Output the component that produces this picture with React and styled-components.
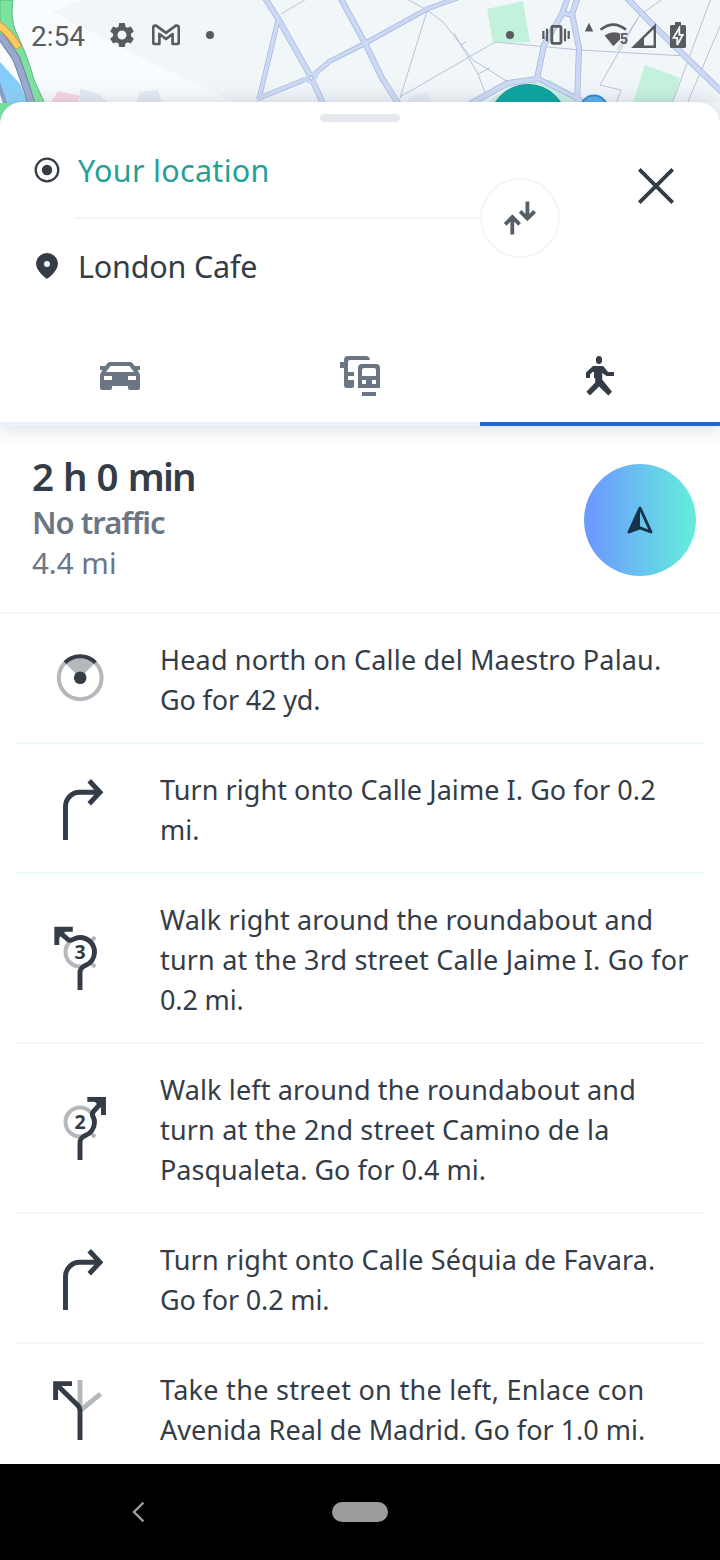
import React from 'react'
import styled, { createGlobalStyle, ThemeProvider } from 'styled-components'
import { MdSettings } from 'react-icons/md'

const theme = {
  text: '#343c47',
  muted: '#6c7584',
  teal: '#26a097',
  accent: '#2068d8',
  status: '#595b5e',
  faded: '#b4b8bd',
  line: '#f3f5f7'
}

const GlobalStyle = createGlobalStyle`
  * {
    box-sizing: border-box;
  }
  body {
    margin: 0;
    background: #fff;
    font-family: 'Noto Sans', 'Open Sans', sans-serif;
  }
  svg {
    display: block;
    flex: none;
  }
  h1, h2, p, ol {
    margin: 0;
    padding: 0;
    font-weight: 400;
  }
`

const Screen = styled.div`
  width: 720px;
  height: 1560px;
  display: flex;
  flex-direction: column;
  overflow: hidden;
  background: #fff;
`
const MapStrip = styled.div`
  position: relative;
  height: 102px;
  flex: none;
`
const MapCanvas = styled.svg`
  position: absolute;
  top: 0;
  left: 0;
`
const StatusBar = styled.div`
  position: relative;
  display: flex;
  align-items: center;
  height: 70px;
  padding: 0 34px 0 31px;
  color: ${({ theme }) => theme.status};
`
const Clock = styled.span`
  width: 56px;
  font: 28px/33px Roboto, sans-serif;
  padding-top: 3px;
`
const StatusIcon = styled.svg`
  margin-left: ${({ $gap }) => $gap}px;
`
const Gear = styled(MdSettings)`
  margin-left: 20px;
`
const Dot = styled.span`
  width: 8px;
  height: 8px;
  margin-left: ${({ $gap }) => $gap};
  border-radius: 50%;
  background: currentColor;
`

const Header = styled.header`
  position: relative;
  z-index: 1;
  flex: none;
  height: 324px;
  padding-top: 12px;
  border-radius: 22px 22px 0 0;
  background: #fff;
  box-shadow: 0 3px 18px rgba(52, 60, 90, 0.18);
`
const Handle = styled.div`
  width: 80px;
  height: 8px;
  margin: 0 auto;
  border-radius: 4px;
  background: #e5e8ef;
`
const RouteForm = styled.div`
  display: flex;
  height: 204px;
`
const Waypoints = styled.div`
  width: 480px;
`
const Waypoint = styled.div`
  display: flex;
  align-items: center;
  height: 96px;
  padding-left: 34px;
  gap: 18px;
  color: ${({ theme }) => theme.text};
`
const WaypointName = styled.span`
  font-size: 30.5px;
  line-height: 40px;
  letter-spacing: ${({ $track }) => $track}px;
  color: ${({ $active, theme }) => ($active ? theme.teal : theme.text)};
`
const Separator = styled.div`
  height: 2px;
  margin: -1px 0 -1px 76px;
  background: ${({ theme }) => theme.line};
`
const SwapButton = styled.button`
  display: flex;
  align-items: center;
  justify-content: center;
  width: 80px;
  height: 80px;
  margin: 56px 0 0;
  padding: 0;
  border: 2px solid #f3f5f8;
  border-radius: 50%;
  background: #fff;
`
const CloseButton = styled.button`
  width: 48px;
  height: 48px;
  margin: 40px 0 0 72px;
  padding: 0;
  border: 0;
  background: none;
`
const Tabs = styled.nav`
  display: grid;
  grid-template-columns: repeat(3, 1fr);
  height: 100px;
`
const Tab = styled.div`
  display: flex;
  align-items: center;
  justify-content: center;
  padding-top: 4px;
  color: ${({ $active, theme }) => ($active ? theme.text : theme.muted)};
  border-bottom: 4px solid
    ${({ $active, theme }) => ($active ? theme.accent : '#edf3fb')};
`

const Summary = styled.section`
  display: flex;
  justify-content: space-between;
  flex: none;
  height: 188px;
  padding: 25px 24px 0 32px;
  border-bottom: 2px solid ${({ theme }) => theme.line};
`
const Duration = styled.h1`
  font-size: 38.5px;
  line-height: 50px;
  font-weight: 600;
  letter-spacing: ${({ $track }) => $track}px;
  word-spacing: 2.4px;
  color: ${({ theme }) => theme.text};
`
const Traffic = styled.h2`
  font-size: 31px;
  line-height: 42px;
  font-weight: 600;
  letter-spacing: ${({ $track }) => $track}px;
  color: ${({ theme }) => theme.muted};
`
const Distance = styled.p`
  font-size: 29.5px;
  line-height: 40px;
  letter-spacing: ${({ $track }) => $track}px;
  color: ${({ theme }) => theme.muted};
`
const StartButton = styled.button`
  display: flex;
  align-items: center;
  justify-content: center;
  width: 112px;
  height: 112px;
  margin-top: 13px;
  padding: 0;
  border: 0;
  border-radius: 50%;
  background: linear-gradient(90deg, #6c9cff 8%, #65e8de 92%);
`

const Steps = styled.ol`
  flex: 1;
  min-height: 0;
  overflow: hidden;
  padding: 0 16px;
  list-style: none;
`
const Step = styled.li`
  display: flex;
  align-items: center;
  gap: 48px;
  padding: 24px 0 24px 32px;
  border-bottom: 2px solid ${({ $tint }) => ($tint ? '#effaf7' : '#f4f6f6')};
  color: ${({ theme }) => theme.text};
`
const StepText = styled.div`
  display: flex;
  flex-direction: column;
`
const StepLine = styled.span`
  font-size: 27px;
  line-height: 40px;
  white-space: nowrap;
  letter-spacing: ${({ $track }) => $track}px;
  transform: translateY(2px);
`
const StepNumber = styled.text`
  font: 700 19.5px 'Open Sans', sans-serif;
  text-anchor: middle;
  fill: currentColor;
`

const NavBar = styled.footer`
  display: grid;
  grid-template-columns: 276px 168px 276px;
  align-items: center;
  justify-items: center;
  flex: none;
  height: 96px;
  background: #000;
`
const HomePill = styled.div`
  width: 56px;
  height: 20px;
  border-radius: 10px;
  background: #9b9b9b;
`

const roads = [
  ['M265 -2L279 20L311 77L324 106', 6],
  ['M278 20L259 99', 5],
  ['M257 99L311 77L330 61L362 45L427 9L460 -3', 5],
  ['M340 -3L365 43L382 78L401 108', 6],
  ['M568 -3L562 14L544 45L538 74Q538 80 530 80L508 83L470 104', 6],
  ['M578 -3L572 14L579 48L577 104', 6],
  ['M562 13L572 15', 5],
  ['M537 78L584 102', 5],
  ['M625 -4L650 22L697 68L724 94', 6]
]
const paths = [
  'M405 -2L427 10L443 22L473 60L508 82',
  'M428 8L400 98',
  'M400 97L495 42L580 50L685 56',
  'M711 -2L672 104',
  'M726 12L687 104',
  'M638 18L600 85L621 90L616 104',
  'M664 -2L640 15L617 50',
  'M281 14L308 -2',
  'M454 33L478 74L487 98',
  'M478 74L490 68',
  'M460 45L466 42'
]

function MapBackground () {
  return (
    <MapCanvas width='720' height='126' viewBox='0 0 720 126'>
      <defs>
        <linearGradient id='shade' x1='0' y1='0' x2='0' y2='1'>
          <stop offset='0' stopColor='#c9d2e0' stopOpacity='0' />
          <stop offset='1' stopColor='#c3cad8' stopOpacity='0.15' />
        </linearGradient>
      </defs>
      <rect width='720' height='126' fill='#f1f6f9' />
      <path d='M0 0H80L52 12L150 62L235 102V126H0Z' fill='#f8fcfe' />
      <path d='M58 91L80 96L78 104H50Z' fill='#f8d3e4' />
      <path d='M80 89L98 94L110 104H80Z M140 92L158 90L162 104H136Z M410 96L428 92L432 104H406Z' fill='#e5ebf2' />
      <path d='M0 62L20 84L28 104H4L0 90Z' fill='#84cdfa' />
      <path d='M0 0H13Q10 18 16 32L24 50Q31 68 34 80L46 106H34L24 75Q16 55 0 36Z' fill='#7be39d' stroke='#58b781' strokeWidth='1' />
      <path d='M0 35L16 58Q24 78 32 106' fill='none' stroke='#6e82b0' strokeWidth='8' />
      <path d='M0 35L16 58Q24 78 32 106' fill='none' stroke='#97a9cb' strokeWidth='6' />
      <path d='M-2 82L6 106' stroke='#7f9bc4' strokeWidth='4' />
      <path d='M-3 24Q8 31 17 45' fill='none' stroke='#d89a4b' strokeWidth='8' strokeLinecap='round' />
      <path d='M-3 24Q8 31 17 45' fill='none' stroke='#ffca60' strokeWidth='6' strokeLinecap='round' />
      <path d='M0 103H12V126H0Z' fill='#7be39d' />
      <path d='M487 9L523 1L530 42L493 43Z M645 65L680 78L672 106H632Z' fill='#c3f2dc' />
      <path d='M485 104L510 86L550 80L582 98V106Z' fill='#c9efe6' />
      {paths.map((d) => (
        <path key={d} d={d} fill='none' stroke='#b3bbd6' strokeWidth='0.9' />
      ))}
      {roads.map(([d, w]) => (
        <path key={d} d={d} fill='none' stroke='#a3b3dc' strokeWidth={w} />
      ))}
      {roads.map(([d, w]) => (
        <path key={d} d={d} fill='none' stroke='#ccd9f5' strokeWidth={w - 1.4} />
      ))}
      <path d='M300 80L311 73L323 66L316 81L311 84Z' fill='#ccd9f5' />
      <circle cx='311' cy='78' r='2.2' fill='#e3ebfb' stroke='#a3b3dc' />
      <rect y='78' width='720' height='24' fill='url(#shade)' />
      <circle cx='528' cy='123.5' r='39' fill='#0ea5a0' stroke='#188c8c' />
      <circle cx='594' cy='109' r='13.5' fill='#5aaee8' stroke='#3f86cc' strokeWidth='2' />
    </MapCanvas>
  )
}

function StatusIcons () {
  return (
    <StatusBar>
      <Clock>2:54</Clock>
      <Gear size={30} />
      <StatusIcon $gap={15} width='28' height='30' viewBox='0 0 28 30'>
        <path
          d='M4.2 5.6L14 12.8L23.8 5.6Q26.8 5 26.8 8V22.2Q26.8 24 25 24H20.6V14L14 19L7.4 14V24H3Q1.2 24 1.2 22.2V8Q1.2 5 4.2 5.6Z'
          fill='none'
          stroke='currentColor'
          strokeWidth='2.7'
          strokeLinejoin='round'
        />
      </StatusIcon>
      <Dot $gap='26px' />
      <Dot $gap='auto' />
      <StatusIcon $gap={28} width='28' height='30' viewBox='0 0 28 30'>
        <rect x='9.8' y='6.3' width='9.2' height='17' rx='1' fill='none' stroke='currentColor' strokeWidth='2.8' />
        <path d='M1.4 11V19M5 8.7V21.3M23 8.7V21.3M26.7 11V19' stroke='currentColor' strokeWidth='2.2' />
      </StatusIcon>
      <StatusIcon $gap={15} width='8' height='30' viewBox='0 0 8 30'>
        <path d='M4 2.7L8.3 11.6H-0.3Z' fill='currentColor' />
      </StatusIcon>
      <StatusIcon $gap={7} width='31' height='30' viewBox='0 0 31 30'>
        <path d='M0.6 9.8Q13.3 -.6 26 9.8' fill='none' stroke='currentColor' strokeWidth='2.6' />
        <path d='M4.6 15.6Q13.3 9.4 21.8 14.4H20V19.5L13.3 26.3Z' fill='currentColor' />
        <text x='19.8' y='24.3' fill='currentColor' fontFamily='Roboto, sans-serif' fontWeight='700' fontSize='14.5'>5</text>
      </StatusIcon>
      <StatusIcon $gap={0} width='25' height='30' viewBox='0 0 25 30'>
        <path fillRule='evenodd' d='M0 28L25 3.3V28Z M13 18.5V25.6H22.6V9.2Z' fill='currentColor' />
      </StatusIcon>
      <StatusIcon $gap={14} width='16' height='30' viewBox='0 0 16 30'>
        <path d='M5 2H11V5H14.5Q16 5 16 6.5V26.5Q16 28 14.5 28H1.5Q0 28 0 26.5V6.5Q0 5 1.5 5H5Z' fill='currentColor' />
        <path d='M9.3 8L3.4 17.8H7.2V25L12.8 14.8H9.3Z' fill='currentColor' stroke='#f4f8fa' strokeWidth='1.8' />
      </StatusIcon>
    </StatusBar>
  )
}

function OriginIcon () {
  return (
    <svg width='26' height='26' viewBox='0 0 26 26' fill='none'>
      <circle cx='13' cy='13' r='11.3' stroke='currentColor' strokeWidth='2.3' />
      <circle cx='13' cy='13' r='5.2' fill='currentColor' />
    </svg>
  )
}

function PinIcon () {
  return (
    <svg width='26' height='26' viewBox='0 0 26 26'>
      <path
        fillRule='evenodd'
        fill='currentColor'
        d='M13 25.8C11 24.6 2.1 17.5 2.1 10.9a10.9 10.9 0 0 1 21.8 0C23.9 17.5 15 24.6 13 25.8Z M13 8.1a2.9 2.9 0 1 0 0 5.8a2.9 2.9 0 0 0 0-5.8Z'
      />
    </svg>
  )
}

function SwapIcon () {
  return (
    <svg width='40' height='40' viewBox='0 0 40 40' fill='none' stroke='#565e69' strokeWidth='3.8'>
      <path d='M12.3 36.4V19M5.2 26.4L12.3 19L19.6 26.4' />
      <path d='M27.4 3.4V20.6M20.2 13.3L27.4 20.6L34.6 13.3' />
    </svg>
  )
}

function CloseIcon () {
  return (
    <svg width='48' height='48' viewBox='0 0 48 48' stroke='#343c47' strokeWidth='3.8'>
      <path d='M7.3 7.3L40.7 40.7M40.7 7.3L7.3 40.7' />
    </svg>
  )
}

function CarIcon () {
  return (
    <svg width='48' height='48' viewBox='0 0 48 48' fill='currentColor' fillRule='evenodd'>
      <path d='M14 10H34Q36 10 37.2 12L38.6 14H44V18H41.5L43 20.5Q44 22 44 24V36Q44 38 42 38H34Q32 38 32 36V34H16V36Q16 38 14 38H6Q4 38 4 36V24Q4 22 5 20.5L6.5 18H4V14H9.4L10.8 12Q12 10 14 10Z M14.6 14L10 20H38L33.4 14Z M8 24V28H16V24Z M32 24V28H40V24Z' />
    </svg>
  )
}

function TransitIcon () {
  return (
    <svg width='48' height='48' viewBox='0 0 48 48' fill='currentColor' fillRule='evenodd'>
      <path d='M12 4H30Q33.5 4 34 8H14Q12 8 12 10V20H18V24H12V28H18V34Q18 36 16 36H11Q8 36 8 33V16H4V10H8V8Q8 4 12 4Z' />
      <path d='M26 12H40Q44 12 44 16V36H22V16Q22 12 26 12Z M28 16Q26 16 26 18V24H40V18Q40 16 38 16Z M26 28V32H30V28Z M36 28V32H40V28Z' />
      <path d='M26 40H40V44H26Z' />
    </svg>
  )
}

function WalkIcon () {
  return (
    <svg width='48' height='48' viewBox='0 0 48 48' fill='currentColor'>
      <ellipse cx='23' cy='8' rx='3.1' ry='4' />
      <path d='M17 14H26Q27.2 14 28 15L32 20H38V24H30.5L26.2 21V27.5L36 39.8L32.4 43.6L23 34.4L14 43.6L10.4 39.8L19.2 30.5V26H18V20H16.5L14 22.5V26H10V20.5Z' />
    </svg>
  )
}

function NavigateIcon () {
  return (
    <svg width='32' height='32' viewBox='0 0 32 32'>
      <path d='M16 4L5 28L16 23.8L27 28Z' fill='none' stroke='#14344c' strokeWidth='2.9' strokeLinejoin='round' />
      <path d='M16 3.5L4.5 28L16 24Z' fill='#14344c' />
    </svg>
  )
}

function StepIcon ({ children }) {
  return (
    <svg width='64' height='64' viewBox='0 0 64 64' fill='none' stroke='currentColor' strokeWidth='4.9'>
      {children}
    </svg>
  )
}

function DepartIcon () {
  return (
    <StepIcon>
      <path d='M32 32L16.6 16.6A21.8 21.8 0 0 1 47.4 16.6Z' fill={theme.faded} stroke='none' />
      <circle cx='32.2' cy='31.8' r='21.4' stroke={theme.faded} strokeWidth='4' />
      <path d='M17 16.7A21.4 21.4 0 0 1 47.4 16.7' strokeWidth='4' />
      <circle cx='32.2' cy='31.8' r='6.3' fill='currentColor' stroke='none' />
    </StepIcon>
  )
}

function TurnRightIcon () {
  return (
    <StepIcon>
      <path d='M17.5 64V30.3A14 14 0 0 1 31.5 16.3H51M41.2 4.8L52 16.3L41.2 27.8' />
    </StepIcon>
  )
}

function ThirdExitIcon () {
  return (
    <StepIcon>
      <circle cx='32' cy='26' r='14.5' stroke={theme.faded} strokeWidth='4' />
      <path d='M43 15L47.2 11M43 37L47.2 41' stroke={theme.faded} strokeWidth='4' />
      <path d='M32 64V46.5C32 42.5 34 41 37 39.6A14.5 14.5 0 0 0 46.5 26A14.5 14.5 0 0 0 32 11.5Q29 11.5 26.6 12.8Q22.5 15.4 19.5 13.2L9 4' />
      <path d='M8.8 19V3.2H24.8' />
      <path d='M9 14L9 4H19L14 9Z' fill='currentColor' stroke='none' />
      <StepNumber x='32' y='33' stroke='none'>3</StepNumber>
    </StepIcon>
  )
}

function SecondExitIcon () {
  return (
    <StepIcon>
      <circle cx='32' cy='26' r='14.5' stroke={theme.faded} strokeWidth='4' />
      <path d='M43 37L47.2 41' stroke={theme.faded} strokeWidth='4' />
      <path d='M32 64V46.5C32 42.5 34 41 37 39.6A14.5 14.5 0 0 0 46.5 26Q46.5 23.5 45 20.8Q43.4 18 45.8 15.2L56 3.6' />
      <path d='M39.3 3.4H57.5' />
      <path d='M55.5 1V19' />
      <path d='M45 4H55V14L50 9Z' fill='currentColor' stroke='none' />
      <StepNumber x='32' y='33' stroke='none'>2</StepNumber>
    </StepIcon>
  )
}

function ForkLeftIcon () {
  return (
    <StepIcon>
      <path d='M32 4V33M33 34L52.5 17.8' stroke={theme.faded} />
      <path d='M32 64V35Q32 31.5 29.5 29L8 8' />
      <path d='M7.6 24V7.6H24' />
    </StepIcon>
  )
}

// each line carries its own letter spacing
const steps = [
  {
    icon: DepartIcon,
    tint: true,
    lines: [['Head north on Calle del Maestro Palau.', 0.17], ['Go for 42 yd.', -0.15]]
  },
  {
    icon: TurnRightIcon,
    tint: true,
    lines: [['Turn right onto Calle Jaime I. Go for 0.2', 0.06], ['mi.', 0]]
  },
  {
    icon: ThirdExitIcon,
    lines: [
      ['Walk right around the roundabout and', 0.06],
      ['turn at the 3rd street Calle Jaime I. Go for', 0.18],
      ['0.2 mi.', -0.15]
    ]
  },
  {
    icon: SecondExitIcon,
    lines: [
      ['Walk left around the roundabout and', 0.14],
      ['turn at the 2nd street Camino de la', 0.17],
      ['Pasqualeta. Go for 0.4 mi.', 0.02]
    ]
  },
  {
    icon: TurnRightIcon,
    lines: [['Turn right onto Calle Séquia de Favara.', 0.13], ['Go for 0.2 mi.', -0.15]]
  },
  {
    icon: ForkLeftIcon,
    lines: [
      ['Take the street on the left, Enlace con', 0.29],
      ['Avenida Real de Madrid. Go for 1.0 mi.', 0]
    ]
  }
]

export default function App () {
  return (
    <ThemeProvider theme={theme}>
      <GlobalStyle />
      <Screen>
        <MapStrip>
          <MapBackground />
          <StatusIcons />
        </MapStrip>
        <Header>
          <Handle />
          <RouteForm>
            <Waypoints>
              <Waypoint>
                <OriginIcon />
                <WaypointName $active $track={0.3}>Your location</WaypointName>
              </Waypoint>
              <Separator />
              <Waypoint>
                <PinIcon />
                <WaypointName $track={-0.18}>London Cafe</WaypointName>
              </Waypoint>
            </Waypoints>
            <SwapButton aria-label='Swap'>
              <SwapIcon />
            </SwapButton>
            <CloseButton aria-label='Close'>
              <CloseIcon />
            </CloseButton>
          </RouteForm>
          <Tabs>
            <Tab><CarIcon /></Tab>
            <Tab><TransitIcon /></Tab>
            <Tab $active><WalkIcon /></Tab>
          </Tabs>
        </Header>
        <Summary>
          <div>
            <Duration $track={-1.7}>2 h 0 min</Duration>
            <Traffic $track={-1}>No traffic</Traffic>
            <Distance $track={0}>4.4 mi</Distance>
          </div>
          <StartButton aria-label='Start'>
            <NavigateIcon />
          </StartButton>
        </Summary>
        <Steps>
          {steps.map(({ icon: Icon, lines, tint }, k) => (
            <Step key={k} $tint={tint}>
              <Icon />
              <StepText>
                {lines.map(([text, track]) => (
                  <StepLine key={text} $track={track}>{text}</StepLine>
                ))}
              </StepText>
            </Step>
          ))}
        </Steps>
        <NavBar>
          <svg width='14' height='24' viewBox='0 0 14 24' fill='none' stroke='#9b9b9b' strokeWidth='2.4'>
            <path d='M12.4 2.6L3 12L12.4 21.4' />
          </svg>
          <HomePill />
        </NavBar>
      </Screen>
    </ThemeProvider>
  )
}
